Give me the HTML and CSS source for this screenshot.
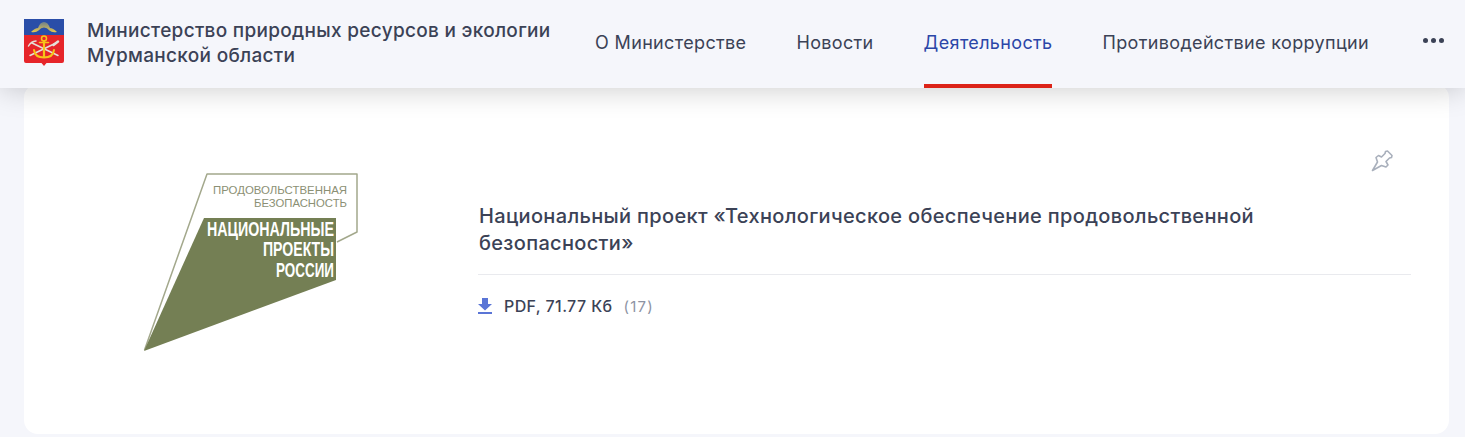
FILE: index.html
```html
<!DOCTYPE html>
<html lang="ru">
<head>
<meta charset="utf-8">
<title>Министерство природных ресурсов и экологии Мурманской области</title>
<link rel="stylesheet" href="styles.css">
</head>
<body>
<header class="header">
  <a class="brand" href="#">
    <svg class="crest" width="40" height="47" viewBox="0 0 40 47">
      <defs>
        <linearGradient id="aurora" x1="0" y1="0" x2="0" y2="1">
          <stop offset="0" stop-color="#6f7f8c"/>
          <stop offset="1" stop-color="#e6c84e"/>
        </linearGradient>
      </defs>
      <path d="M0 0H40V42Q40 44 38 44H22.500L20 47L17.500 44H2Q0 44 0 42Z" fill="#e6252a"/>
      <path d="M0 0H40V16H0Z" fill="#2a4ea8"/>
      <path d="M7 13Q11 9 14 9Q16 3 20 3Q24 3 26 9Q29 9 33 13Q28 14 25.500 11.500Q23 8.500 20 8.500Q17 8.500 14.500 11.500Q12 14 7 13Z" fill="url(#aurora)"/>
      <g fill="none" stroke-linecap="round">
        <path d="M6 36.500L32 24" stroke="#e4e0d8" stroke-width="1.500"/>
        <path d="M34 36.500L8 24" stroke="#e4e0d8" stroke-width="1.500"/>
        <path d="M4.500 27Q7 22.500 12 22" stroke="#e4e0d8" stroke-width="1.500"/>
        <path d="M29.500 26L34 22.500" stroke="#e4e0d8" stroke-width="2.500"/>
        <path d="M20 22V38" stroke="#f6c51a" stroke-width="2.200"/>
        <path d="M10 31Q11 38.500 20 38.500Q29 38.500 30 31" stroke="#f6c51a" stroke-width="2"/>
        <path d="M15.500 23.500H24.500" stroke="#f6c51a" stroke-width="1.600"/>
        <circle cx="20" cy="19.500" r="2.500" stroke="#f6c51a" stroke-width="1.500"/>
      </g>
    </svg>
    <span class="brand-name">Министерство природных ресурсов и экологии<br>Мурманской области</span>
  </a>
  <nav class="nav">
    <a class="nav-item" href="#">О Министерстве</a>
    <a class="nav-item" href="#">Новости</a>
    <a class="nav-item nav-item-active" href="#">Деятельность</a>
    <a class="nav-item" href="#">Противодействие коррупции</a>
  </nav>
  <button class="more" type="button" aria-label="Ещё"><i></i><i></i><i></i></button>
</header>
<main class="page">
  <article class="card">
    <div class="card-image">
      <svg class="project-logo" width="220" height="185" viewBox="0 0 220 185">
        <path d="M4.500 180L67 4H217V62L197 72" fill="none" stroke="#a3a88c" stroke-width="1.500" stroke-linejoin="round"/>
        <path d="M4 181L64 48H196V110Z" fill="#747f54"/>
        <text class="logo-small" x="207" y="24" text-anchor="end" textLength="134" lengthAdjust="spacingAndGlyphs">ПРОДОВОЛЬСТВЕННАЯ</text>
        <text class="logo-small" x="207" y="37" text-anchor="end" textLength="93" lengthAdjust="spacingAndGlyphs">БЕЗОПАСНОСТЬ</text>
        <text class="logo-big" x="194" y="66" text-anchor="end" textLength="127" lengthAdjust="spacingAndGlyphs">НАЦИОНАЛЬНЫЕ</text>
        <text class="logo-big" x="194" y="86" text-anchor="end" textLength="71" lengthAdjust="spacingAndGlyphs">ПРОЕКТЫ</text>
        <text class="logo-big" x="194" y="107" text-anchor="end" textLength="58" lengthAdjust="spacingAndGlyphs">РОССИИ</text>
      </svg>
    </div>
    <div class="card-body">
      <h2 class="card-title">Национальный проект «Технологическое обеспечение продовольственной безопасности»</h2>
      <div class="file">
        <svg class="file-icon" width="14" height="16" viewBox="0 0 14 16"><path d="M4 0H10V6H14L7 12.500L0 6H4ZM0 14H14V16H0Z" fill="#5a75d6"/></svg>
        <a class="file-link" href="#">PDF, 71.77 Кб</a>
        <span class="file-count">(17)</span>
      </div>
    </div>
    <svg class="pin" width="22" height="22" viewBox="0 0 22 22">
      <path d="M1.500 20.500L6.500 12L5 7.500L7.500 5.500L10.500 7L14 3.500L14.500 1.500L16.500 1L21 5.500L20.500 7.500L18.500 8L15 11.500L17 15L15 17L10.500 15.500Z" fill="none" stroke="#a9b0bc" stroke-width="1.600" stroke-linejoin="round"/>
    </svg>
  </article>
</main>
</body>
</html>
```

FILE: styles.css
```css
* { box-sizing: border-box; }
html, body { margin: 0; height: 100%; }
body {
  background: #f5f6fb;
  font-family: Inter, "Noto Sans", sans-serif;
  color: #3b4256;
  overflow: hidden;
}
a { color: inherit; text-decoration: none; }

.header {
  position: relative;
  z-index: 2;
  height: 88px;
  display: flex;
  padding-left: 24px;
  background: #f5f6fb;
  box-shadow: 0 0 30px rgba(0, 0, 0, .22);
}
.brand {
  display: flex;
  align-items: center;
  gap: 23px;
  width: 571px;
  padding-bottom: 2px;
}
.crest { flex: none; margin-top: -1px; }
.brand-name {
  font-size: 19px;
  line-height: 25px;
  font-weight: 500;
  letter-spacing: .3px;
}
.nav { display: flex; gap: 50px; }
.nav-item {
  display: flex;
  align-items: center;
  height: 88px;
  font-size: 18px;
  letter-spacing: .35px;
  border-bottom: 4px solid transparent;
}
.nav-item-active {
  color: #2b46a8;
  border-bottom-color: #dc2318;
}
.more {
  display: flex;
  gap: 3px;
  height: 6px;
  margin: 38px 0 0 54px;
  padding: 0;
  border: 0;
  background: none;
}
.more i {
  width: 5px;
  height: 5px;
  border-radius: 50%;
  background: #3b4256;
}

.page { padding: 0 16px 3px 24px; height: 349px; }
.card {
  position: relative;
  display: flex;
  height: 350px;
  margin-top: -4px;
  background: #fff;
  border-radius: 14px;
}
.card-image {
  flex: none;
  width: 454px;
  display: flex;
  justify-content: center;
  padding-top: 86px;
}
.project-logo { display: block; margin-left: -2px; }
.logo-small { font: 10.500px "Liberation Sans", sans-serif; fill: #8b9074; }
.logo-big { font: 700 20px "Liberation Sans", sans-serif; fill: #fff; }

.card-body { flex: 1; padding: 119px 38px 0 0; }
.card-title {
  margin: 0;
  padding: 0 130px 17px 1px;
  border-bottom: 1px solid #e9eaee;
  font-size: 20px;
  line-height: 27px;
  font-weight: 500;
  letter-spacing: .33px;
}
.file {
  display: flex;
  align-items: center;
  gap: 11px;
  margin-top: 21px;
  font-size: 16px;
}
.file-icon { flex: none; }
.file-link { font-weight: 500; letter-spacing: .4px; margin-left: 1px; }
.file-count { color: #8d93a3; font-size: 15px; letter-spacing: 1.200px; }
.pin { position: absolute; top: 66px; right: 56px; }
```
